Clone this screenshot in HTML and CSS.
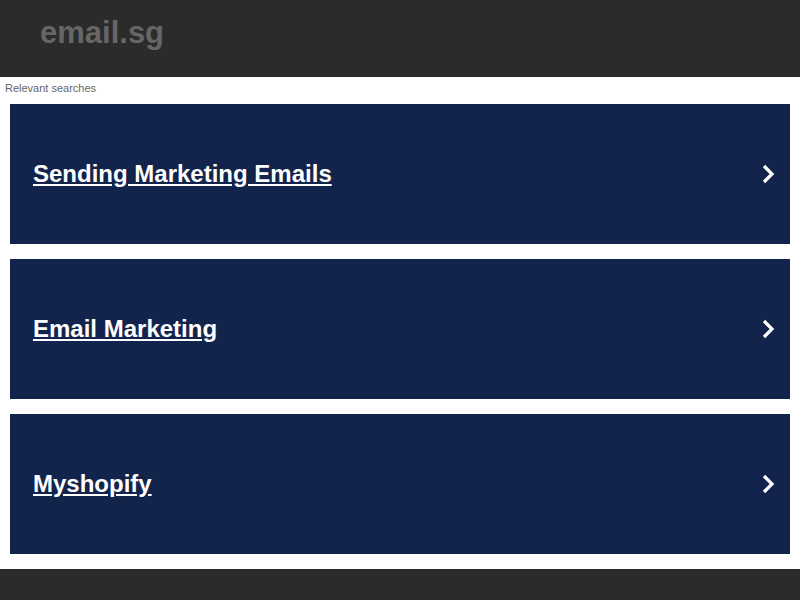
FILE: index.html
```html
<!DOCTYPE html>
<html>
<head>
<meta charset="utf-8">
<link rel="stylesheet" href="styles.css">
</head>
<body>
<header class="header"><span class="logo">email.sg</span></header>
<div class="label">Relevant searches</div>
<main class="list">
  <a class="card" href="#"><span class="card-text">Sending Marketing Emails</span>
    <svg class="chev" width="14" height="20" viewBox="0 0 14 20"><path d="M3 2 L11 10 L3 18" fill="none" stroke="#fff" stroke-width="3.2"/></svg></a>
  <a class="card" href="#"><span class="card-text">Email Marketing</span>
    <svg class="chev" width="14" height="20" viewBox="0 0 14 20"><path d="M3 2 L11 10 L3 18" fill="none" stroke="#fff" stroke-width="3.2"/></svg></a>
  <a class="card" href="#"><span class="card-text">Myshopify</span>
    <svg class="chev" width="14" height="20" viewBox="0 0 14 20"><path d="M3 2 L11 10 L3 18" fill="none" stroke="#fff" stroke-width="3.2"/></svg></a>
</main>
<footer class="footer"></footer>
</body>
</html>
```
FILE: styles.css
```css
* { box-sizing: border-box; }
html, body { margin: 0; padding: 0; background: #fff; font-family: "Liberation Sans", Arial, sans-serif; }
.header { height: 77px; background: #2b2b2b; padding: 15px 0 0 40px; }
.logo { font-size: 31px; font-weight: bold; color: #666; line-height: 36px; }
.label { font-size: 11px; color: #666; height: 27px; padding: 5px 0 0 5px; line-height: 13px; }
.list { display: flex; flex-direction: column; gap: 15px; padding: 0 10px; }
.card { display: flex; align-items: center; justify-content: space-between; height: 140px; background: #13244c; color: #fff; padding: 0 15px 0 23px; text-decoration: none; }
.card-text { font-size: 24px; font-weight: bold; text-decoration: underline; }
.chev { display: block; }
.footer { margin-top: 15px; height: 31px; background: #2b2b2b; }
```
